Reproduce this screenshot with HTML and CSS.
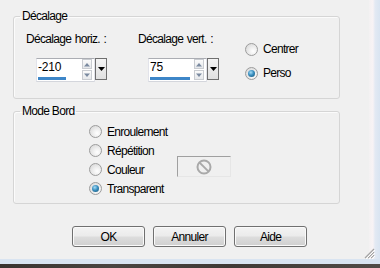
FILE: index.html
```html
<!DOCTYPE html>
<html lang="fr">
<head>
<meta charset="utf-8">
<title>Décalage</title>
<link rel="stylesheet" href="styles.css">
</head>
<body>
<div class="screen">
  <div class="window">
    <div class="client">
      <fieldset class="group g1">
        <legend>Décalage</legend>
        <div class="offset-row">
          <div class="offset-col c1">
            <div class="label">Décalage horiz. :</div>
            <div class="spin">
              <div class="field">
                <div class="field-main">
                  <span class="val">-210</span>
                  <span class="bar" style="width:28px"></span>
                </div>
                <div class="arrows">
                  <span class="arr"><svg width="8" height="5" viewBox="0 0 8 5"><path d="M1 4.5 L4 1 L7 4.5Z" fill="#7a8aa0"/></svg></span>
                  <span class="arr"><svg width="8" height="5" viewBox="0 0 8 5"><path d="M1 0.5 L4 4 L7 0.5Z" fill="#7a8aa0"/></svg></span>
                </div>
              </div>
              <div class="drop"><svg width="7" height="4" viewBox="0 0 7 4"><path d="M0 0 H7 L3.5 4Z" fill="#000"/></svg></div>
            </div>
          </div>
          <div class="offset-col c2">
            <div class="label">Décalage vert. :</div>
            <div class="spin">
              <div class="field">
                <div class="field-main">
                  <span class="val">75</span>
                  <span class="bar" style="width:40px"></span>
                </div>
                <div class="arrows">
                  <span class="arr"><svg width="8" height="5" viewBox="0 0 8 5"><path d="M1 4.5 L4 1 L7 4.5Z" fill="#7a8aa0"/></svg></span>
                  <span class="arr"><svg width="8" height="5" viewBox="0 0 8 5"><path d="M1 0.5 L4 4 L7 0.5Z" fill="#7a8aa0"/></svg></span>
                </div>
              </div>
              <div class="drop"><svg width="7" height="4" viewBox="0 0 7 4"><path d="M0 0 H7 L3.5 4Z" fill="#000"/></svg></div>
            </div>
          </div>
          <div class="align-radios">
            <div class="radio"><span class="circle"></span><span>Centrer</span></div>
            <div class="radio"><span class="circle on"></span><span>Perso</span></div>
          </div>
        </div>
      </fieldset>
      <fieldset class="group g2">
        <legend>Mode Bord</legend>
        <div class="mode">
          <div class="mode-list">
            <div class="radio row"><span class="circle"></span><span>Enroulement</span></div>
            <div class="radio row"><span class="circle"></span><span>Répétition</span></div>
            <div class="radio row"><span class="circle"></span><span>Couleur</span></div>
            <div class="radio row"><span class="circle on"></span><span>Transparent</span></div>
          </div>
          <div class="color-box">
            <svg width="18" height="18" viewBox="0 0 18 18"><circle cx="9" cy="9" r="6.5" fill="none" stroke="#a9a9a9" stroke-width="2"/><path d="M4.6 4.6 L13.4 13.4" stroke="#a9a9a9" stroke-width="2"/></svg>
          </div>
        </div>
      </fieldset>
      <div class="buttons">
        <button class="btn">OK</button>
        <button class="btn">Annuler</button>
        <button class="btn">Aide</button>
      </div>
      <div class="grip">
        <svg width="12" height="12" viewBox="0 0 12 12">
          <path d="M11 2 L2 11 M11 5 L5 11 M11 8 L8 11" stroke="#a3a3a3" stroke-width="1.2"/>
          <path d="M12 3 L3 12 M12 6 L6 12 M12 9 L9 12" stroke="#ffffff" stroke-width="1"/>
        </svg>
      </div>
    </div>
    <div class="frame-right"></div>
  </div>
  <div class="frame-bottom"></div>
  <div class="taskbar"></div>
</div>
</body>
</html>
```

FILE: styles.css
```css
html, body {
  margin: 0;
  padding: 0;
}
body {
  background: #3b3531;
  font-family: "Liberation Sans", Arial, sans-serif;
  font-size: 12px;
  letter-spacing: -0.7px;
  line-height: 14px;
  color: #000;
}
.screen {
  width: 380px;
  height: 268px;
  display: flex;
  flex-direction: column;
  overflow: hidden;
}
.window {
  display: flex;
  height: 259px;
}
.client {
  width: 369px;
  background: #f0f0f0;
  position: relative;
  box-sizing: border-box;
  padding: 9px 0 0 13px;
}
.frame-right {
  flex: 1;
  background: linear-gradient(90deg, #f3f1f2 0, #f8f3f5 35%, #e3e9f3 55%, #d9e4f1 100%);
}
.frame-bottom {
  height: 5px;
  background: #d9e4f1;
}
.taskbar {
  flex: 1;
  background: linear-gradient(90deg, #3a332f 0, #4a4541 30%, #3f3935 60%, #514b47 100%);
}

/* group boxes */
.group {
  margin: 0;
  padding: 0;
  width: 327px;
  box-sizing: border-box;
  border: 1px solid #d5d5d5;
  border-radius: 3px;
  box-shadow: inset 1px 1px 0 #fbfbfb;
  min-inline-size: 0;
}
.group legend {
  padding: 0 2px;
  margin-left: 6px;
  line-height: 14px;
}
.g1 {
  padding: 9px 0 16px 0;
}
.g2 {
  margin-top: 5px;
  padding: 4px 0 5px 0;
}

.offset-row {
  display: flex;
}
.offset-col {
  display: flex;
  flex-direction: column;
}
.c1 {
  margin-left: 12px;
  width: 112px;
}
.c2 {
  width: 107px;
}
.label {
  height: 14px;
  white-space: nowrap;
  word-spacing: 1px;
}
.spin {
  margin-top: 12px;
  margin-left: 10px;
  display: flex;
  align-items: flex-start;
}
.field {
  width: 59px;
  height: 24px;
  box-sizing: border-box;
  background: #fff;
  border: 1px solid #e2e3ea;
  border-top-color: #abadb3;
  border-bottom-color: #d4d6dc;
  display: flex;
}
.field-main {
  flex: 1;
  display: flex;
  flex-direction: column;
  justify-content: space-between;
  padding: 1px 0 1px 1px;
}
.val {
  letter-spacing: -0.2px;
  line-height: 14px;
}
.bar {
  display: block;
  height: 3px;
  background: #3d86c8;
}
.arrows {
  width: 10px;
  margin-right: 2px;
  display: flex;
  flex-direction: column;
}
.arr {
  height: 10px;
  box-sizing: border-box;
  border: 1px solid #c9ccd1;
  background: linear-gradient(#fbfbfb, #e6e8eb);
  display: flex;
  align-items: center;
  justify-content: center;
}
.arr + .arr {
  margin-top: 1px;
}
.drop {
  width: 12px;
  height: 22px;
  box-sizing: border-box;
  border: 1px solid #6f6f6f;
  background: linear-gradient(#f4f4f4, #e0e0e0);
  display: flex;
  align-items: center;
  justify-content: center;
}

/* radios */
.radio {
  display: flex;
  align-items: center;
  gap: 5px;
  height: 14px;
  white-space: nowrap;
}
.circle {
  width: 13px;
  height: 13px;
  box-sizing: border-box;
  border-radius: 50%;
  border: 1px solid #9c9c9c;
  background: radial-gradient(circle at 65% 65%, #ffffff 0, #f0f0f0 35%, #d2d2d2 100%);
  display: flex;
  align-items: center;
  justify-content: center;
  flex: none;
}
.circle.on::after {
  content: "";
  width: 7px;
  height: 7px;
  border-radius: 50%;
  background: radial-gradient(circle at 40% 35%, #a6dcf5 0, #3a8fc0 45%, #15506f 100%);
}
.align-radios {
  padding-top: 10px;
  display: flex;
  flex-direction: column;
  gap: 10px;
}

.mode {
  display: flex;
  align-items: flex-start;
}
.mode-list {
  margin-left: 75px;
  width: 88px;
  display: flex;
  flex-direction: column;
}
.radio.row {
  height: 19px;
}
.color-box {
  margin-top: 34px;
  width: 54px;
  height: 21px;
  box-sizing: border-box;
  border: 1px solid #a0a0a0;
  border-right-color: #e6e6e6;
  border-bottom-color: #e6e6e6;
  background: #f0f0f0;
  display: flex;
  align-items: center;
  justify-content: center;
}

/* buttons */
.buttons {
  margin-top: 22px;
  margin-left: 59px;
  display: flex;
  gap: 8px;
}
.btn {
  width: 73px;
  height: 21px;
  box-sizing: border-box;
  border: 1px solid #707070;
  border-radius: 3px;
  background: linear-gradient(#f3f3f3 0, #ebebeb 48%, #dddddd 52%, #cfcfcf 100%);
  box-shadow: inset 0 0 0 1px #fafafa;
  font: inherit;
  letter-spacing: inherit;
  color: #000;
  padding: 0;
}
.grip {
  position: absolute;
  right: -6px;
  bottom: 0;
  width: 12px;
  height: 12px;
}
```
